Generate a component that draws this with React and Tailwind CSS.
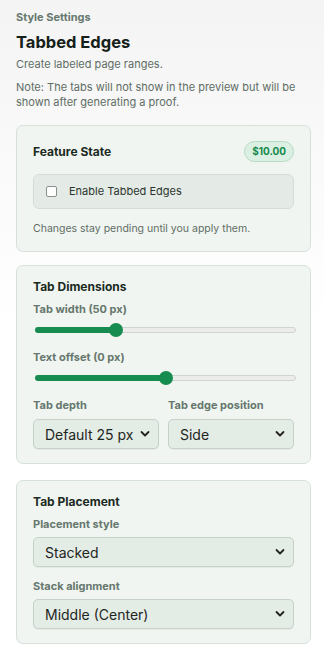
import { useState } from "react";

const Chevron = () => (
  <svg
    className="pointer-events-none absolute right-[9px] top-1/2 -translate-y-1/2"
    width="10"
    height="7"
    viewBox="0 0 10 7"
    fill="none"
  >
    <path d="M1.5 1.5L5 5L8.5 1.5" stroke="#222" strokeWidth="1.8" strokeLinecap="round" strokeLinejoin="round" />
  </svg>
);

const Select = ({ value, options }) => (
  <div className="relative">
    <select
      defaultValue={value}
      className="w-full h-[30px] appearance-none rounded-[5px] border border-[#c6d1ca] bg-[#e4ece6] pl-[11px] pr-6 text-[14px] text-[#1e2622] shadow-[0_1px_1px_rgba(0,0,0,0.05)] outline-none"
    >
      {options.map((o) => (
        <option key={o}>{o}</option>
      ))}
    </select>
    <Chevron />
  </div>
);

const Slider = ({ pct }) => (
  <div className="relative ml-[2px] mr-[-2px] h-[14px] flex items-center">
    <div className="h-[6px] w-full rounded-full border border-[#cfd4d1] bg-[#ececec]" />
    <div className="absolute left-0 h-[6px] rounded-full bg-[#178c50]" style={{ width: `${pct}%` }} />
    <div
      className="absolute h-[14px] w-[14px] -translate-x-1/2 rounded-full bg-[#178c50]"
      style={{ left: `${pct}%` }}
    />
  </div>
);

const Label = ({ children }) => (
  <p className="text-[11px] font-bold leading-[14px] text-[#66776d]">{children}</p>
);

const Card = ({ children, className = "" }) => (
  <div className={`ml-4 mr-[13px] rounded-[7px] border border-[#d6e1da] bg-[#f0f5f1] px-4 ${className}`}>
    {children}
  </div>
);

const App = () => {
  const [enabled, setEnabled] = useState(false);

  return (
    <div className="min-h-[652px] w-[324px] bg-gradient-to-b from-[#f3f4f3] via-white to-white pb-2 font-['Inter',sans-serif] text-[#1b2a22]">
      <div className="px-4 pt-[10px]">
        <p className="text-[11px] font-bold leading-[14px] text-[#67786e]">Style Settings</p>
        <h1 className="mt-[8px] text-[16.5px] font-bold leading-[20px] text-[#142019]">Tabbed Edges</h1>
        <p className="mt-[5px] text-[11px] leading-[15px] text-[#5f6d65]">Create labeled page ranges.</p>
        <p className="mt-[8px] text-[11px] leading-[15px] text-[#5f6d65]">
          Note: The tabs will not show in the preview but will be shown after generating a proof.
        </p>
      </div>

      <Card className="mt-[15px] pt-[15px] pb-[15px]">
        <div className="flex items-center justify-between">
          <h2 className="text-[12px] font-bold leading-[16px] text-[#1b2a22]">Feature State</h2>
          <span className="rounded-full border border-[#b5dcc2] bg-[#dcefe3] px-[7px] py-[3px] text-[10px] font-bold leading-[13px] text-[#168a4c]">
            $10.00
          </span>
        </div>
        <label className="mt-[12px] flex h-[35px] items-center gap-[12px] rounded-[6px] border border-[#d3ddd6] bg-[#e4ebe6] px-[12px]">
          <input
            type="checkbox"
            checked={enabled}
            onChange={(e) => setEnabled(e.target.checked)}
            className="h-[11px] w-[11px] appearance-none rounded-[2px] border border-[#8a8f8c] bg-white"
          />
          <span className="text-[11px] text-[#2b3530]">Enable Tabbed Edges</span>
        </label>
        <p className="mt-[12px] text-[10.5px] leading-[15px] text-[#5f6d65]">Changes stay pending until you apply them.</p>
      </Card>

      <Card className="mt-[13px] pt-[13px] pb-[14px]">
        <h2 className="text-[12px] font-bold leading-[16px] text-[#1b2a22]">Tab Dimensions</h2>
        <div className="mt-[7px]">
          <Label>Tab width (50 px)</Label>
        </div>
        <div className="mt-[7px]">
          <Slider pct={31} />
        </div>
        <div className="mt-[13px]">
          <Label>Text offset (0 px)</Label>
        </div>
        <div className="mt-[7px]">
          <Slider pct={50} />
        </div>
        <div className="mt-[13px] grid grid-cols-2 gap-[9px]">
          <div>
            <Label>Tab depth</Label>
            <div className="mt-[7px]">
              <Select value="Default 25 px" options={["Default 25 px", "Shallow 15 px", "Deep 35 px"]} />
            </div>
          </div>
          <div>
            <Label>Tab edge position</Label>
            <div className="mt-[7px]">
              <Select value="Side" options={["Side", "Top", "Bottom"]} />
            </div>
          </div>
        </div>
      </Card>

      <Card className="mt-[16px] pt-[13px] pb-[14px]">
        <h2 className="text-[12px] font-bold leading-[16px] text-[#1b2a22]">Tab Placement</h2>
        <div className="mt-[7px]">
          <Label>Placement style</Label>
        </div>
        <div className="mt-[6px]">
          <Select value="Stacked" options={["Stacked", "Spread"]} />
        </div>
        <div className="mt-[12px]">
          <Label>Stack alignment</Label>
        </div>
        <div className="mt-[6px]">
          <Select value="Middle (Center)" options={["Top", "Middle (Center)", "Bottom"]} />
        </div>
      </Card>
    </div>
  );
};

export default App;
